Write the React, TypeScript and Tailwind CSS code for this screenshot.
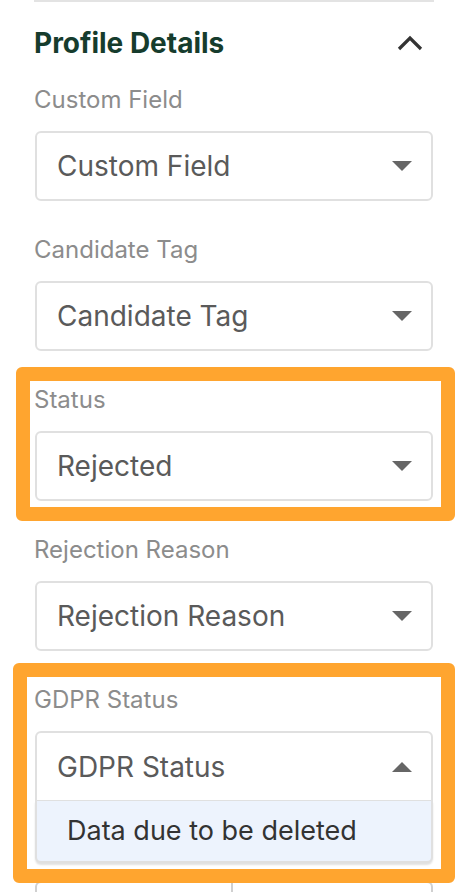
import React from "react";

const Caret = ({ up = false }: { up?: boolean }) => (
  <svg width="20" height="10" viewBox="0 0 20 10" className="shrink-0">
    {up ? <path d="M0 10 L10 0 L20 10 Z" fill="#666666" /> : <path d="M0 0 L20 0 L10 10 Z" fill="#666666" />}
  </svg>
);

const Field = ({ label, value, first = false }: { label: string; value: string; first?: boolean }) => (
  <div className={first ? "mt-[23px]" : "mt-[33px]"}>
    <div className="text-[24px] leading-[32px] text-[#8c8c8c]">{label}</div>
    <div className="mt-[15px] mx-px h-[70px] border-2 border-[#e0e0e0] rounded-[6px] flex items-center justify-between pl-[20px] pr-[19px]">
      <span className="text-[28px] text-[#5a5a5a]">{value}</span>
      <Caret />
    </div>
  </div>
);

export default function App() {
  return (
    <div
      className="relative w-[468px] h-[892px] overflow-hidden bg-white"
      style={{ fontFamily: "Inter, 'Open Sans', sans-serif" }}
    >
      <div className="ml-[34px] w-[400px]">
        <div className="h-[2px] bg-[#e3e3e3]" />
        <div className="mt-[23px] h-[36px] flex items-center justify-between">
          <span className="text-[28px] font-bold text-[#163c2d]">Profile Details</span>
          <svg width="26" height="16" viewBox="0 0 26 16" className="mr-[11px]">
            <polyline points="2,14 13,3 24,14" fill="none" stroke="#333333" strokeWidth="3.2" />
          </svg>
        </div>
        <Field first label="Custom Field" value="Custom Field" />
        <Field label="Candidate Tag" value="Candidate Tag" />
        <Field label="Status" value="Rejected" />
        <Field label="Rejection Reason" value="Rejection Reason" />
        <div className="mt-[33px]">
          <div className="text-[24px] leading-[32px] text-[#8c8c8c]">GDPR Status</div>
          <div className="relative z-10 mt-[15px] mx-px">
            <div className="h-[70px] border-2 border-b border-[#e0e0e0] rounded-t-[6px] flex items-center justify-between pl-[20px] pr-[19px] bg-white">
              <span className="text-[28px] text-[#5a5a5a]">GDPR Status</span>
              <Caret up />
            </div>
            <div className="absolute left-0 right-0 top-[70px] h-[62px] bg-[#edf3fd] border-2 border-t-0 border-[#e0e0e0] rounded-b-[6px] shadow-[0_2px_2px_rgba(0,0,0,0.12)] flex items-center pl-[30px]">
              <span className="text-[27px] text-[#333333]">Data due to be deleted</span>
            </div>
          </div>
        </div>
        <div className="mt-[33px]">
          <div className="h-[32px]" />
          <div className="mt-[15px] mx-px h-[70px] border-2 border-[#d0d0d0] rounded-[6px] flex">
            <div className="w-[196px] border-r-2 border-[#d0d0d0]" />
            <div className="flex-1" />
          </div>
        </div>
      </div>

      <div className="pointer-events-none absolute left-[16px] top-[367px] w-[439px] h-[154px] border-[14px] border-[#ffa52f] rounded-[6px]" />
      <div className="pointer-events-none absolute z-20 left-[13px] top-[663px] w-[442px] h-[220px] border-[14px] border-[#ffa52f] rounded-[6px]" />
    </div>
  );
}
